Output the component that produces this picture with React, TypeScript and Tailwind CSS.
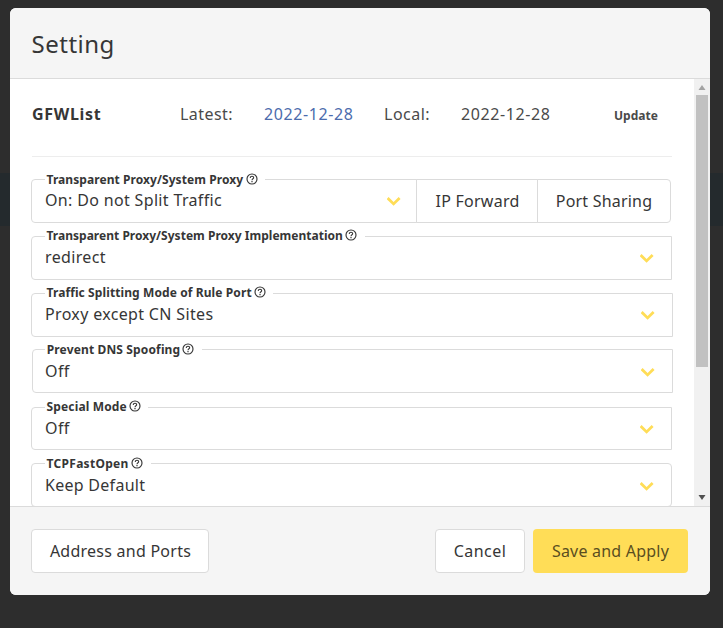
import type { ReactNode } from "react";

function Help() {
  return (
    <svg className="-mt-[2px] block h-[12px] w-[12px] shrink-0" viewBox="0 0 12 12" fill="none" stroke="#363636">
      <circle cx="6" cy="6" r="5" strokeWidth="1.15" />
      <path d="M4.3 4.9C4.3 3.8 5 3.2 6 3.2s1.7.6 1.7 1.5C7.7 5.7 6 5.9 6 7.2" strokeWidth="1.1" />
      <path d="M6 8v1.2" strokeWidth="1.2" />
    </svg>
  );
}

function Chevron() {
  return (
    <svg className="block h-[9px] w-[14px]" viewBox="0 0 14 9" fill="none" stroke="#ffdd57" strokeWidth="2.8" strokeLinejoin="miter">
      <path d="M.6 1.1 6.6 6.9 12.6 1.1" />
    </svg>
  );
}

type FieldProps = {
  label: string;
  labelClass: string;
  notchClass: string;
  value: string;
  valueClass: string;
  chevronClass: string;
  box: string;
};

function Field({ label, labelClass, notchClass, value, valueClass, chevronClass, box }: FieldProps) {
  return (
    <div className={`relative flex shrink-0 items-start justify-between border border-[#dbdbdb] bg-white ${box}`}>
      <div className={`absolute flex h-[14px] items-center bg-white ${notchClass}`}>
        <span className={`whitespace-nowrap text-[12px] font-bold leading-[14px] ${labelClass}`}>{label}</span>
        <Help />
      </div>
      <span className={`whitespace-nowrap text-[16px] leading-[24px] ${valueClass}`}>{value}</span>
      <div className={chevronClass}>
        <Chevron />
      </div>
    </div>
  );
}

function Button({ children, className }: { children: ReactNode; className: string }) {
  return (
    <button className={`flex h-[44px] items-center justify-center whitespace-nowrap border text-[16px] leading-[24px] ${className}`}>
      {children}
    </button>
  );
}

export default function App() {
  return (
    <div className="h-[628px] w-[723px] overflow-hidden bg-[linear-gradient(#2d2d2d_173px,#242a2d_173px,#242a2d_226px,#2d2d2d_226px)] pl-[10px] pt-[8px] font-['Noto_Sans',sans-serif] text-[#363636]">
      <div className="flex h-[587px] w-[700px] flex-col overflow-hidden rounded-[6px] bg-white">
        <header className="flex h-[71px] shrink-0 items-center border-b border-[#dbdbdb] bg-[#f5f5f5] pl-[21.5px] pt-[2px]">
          <h1 className="text-[24px] leading-[24px] tracking-[0.5px]">Setting</h1>
        </header>
        <main className="flex h-[427px] shrink-0 overflow-hidden">
          <div className="flex w-[684px] flex-col overflow-hidden pl-[21px]">
            <div className="ml-px flex h-[78px] w-[640px] shrink-0 items-start border-b border-[#ededed] pt-[23px] text-[16px] leading-[24px] text-[#4a4a4a]">
              <strong className="w-[148px] font-bold tracking-[0.7px] text-[#363636]">GFWList</strong>
              <span className="w-[84px] tracking-[0.45px]">Latest:</span>
              <span className="w-[120px] tracking-[0.6px] text-[#4c6cad]">2022-12-28</span>
              <span className="w-[77px] tracking-[0.5px]">Local:</span>
              <span className="w-[153px] tracking-[0.6px]">2022-12-28</span>
              <strong className="pt-[2px] text-[12px] font-bold">Update</strong>
            </div>
            <div className="mt-[22px] flex shrink-0">
              <Field
                label="Transparent Proxy/System Proxy"
                labelClass="mr-[2.5px] tracking-[0.07px]"
                notchClass="left-[13px] top-[-7px] w-[220px] pl-[1.5px]"
                value="On: Do not Split Traffic"
                valueClass="pt-[8px] tracking-[0.34px]"
                chevronClass="pt-[17px]"
                box="h-[44px] w-[386px] rounded-l-[4px] pl-[13px] pr-[15px]"
              />
              <Button className="-ml-px w-[122px] border-[#dbdbdb] bg-white pl-px tracking-[0.25px]">IP Forward</Button>
              <Button className="-ml-px w-[134px] rounded-r-[4px] border-[#dbdbdb] bg-white tracking-[0.2px]">Port Sharing</Button>
            </div>
            <Field
              label="Transparent Proxy/System Proxy Implementation"
              labelClass="mr-[2px] tracking-[0.02px]"
              notchClass="left-[13px] top-[-8px] w-[320px] pl-[1.5px]"
              value="redirect"
              valueClass="pt-[8px] tracking-[0.35px]"
              chevronClass="pt-[17px]"
              box="mt-[13px] h-[44px] w-[641px] rounded-l-[4px] pl-[13px] pr-[17px]"
            />
            <Field
              label="Traffic Splitting Mode of Rule Port"
              labelClass="mr-[2px] tracking-[0.1px]"
              notchClass="left-[13px] top-[-8px] w-[228px] pl-[1.5px]"
              value="Proxy except CN Sites"
              valueClass="pt-[8px] tracking-[0.34px]"
              chevronClass="pt-[17px]"
              box="mt-[13px] h-[44px] w-[642px] rounded-l-[4px] pl-[13px] pr-[17px]"
            />
            <Field
              label="Prevent DNS Spoofing"
              labelClass="mr-[2px] tracking-[0.14px]"
              notchClass="left-[12px] top-[-7px] w-[157px] pl-[1.75px]"
              value="Off"
              valueClass="pt-[9px] tracking-[0.4px]"
              chevronClass="pt-[18px]"
              box="ml-px mt-[12px] h-[44px] w-[641px] rounded-l-[4px] pl-[12px] pr-[17px]"
            />
            <Field
              label="Special Mode"
              labelClass="mr-[2px] tracking-[0.15px]"
              notchClass="left-[13px] top-[-8px] w-[103px] pl-[1.5px]"
              value="Off"
              valueClass="pt-[8px] tracking-[0.4px]"
              chevronClass="pt-[17px]"
              box="mt-[14px] h-[43px] w-[641px] rounded-l-[4px] pl-[13px] pr-[17px]"
            />
            <Field
              label="TCPFastOpen"
              labelClass="mr-[2.5px] tracking-[0.3px]"
              notchClass="left-[13px] top-[-7px] w-[106px] pl-[1.5px]"
              value="Keep Default"
              valueClass="pt-[9px] tracking-[0.28px]"
              chevronClass="pt-[18px]"
              box="mt-[13px] h-[44px] w-[641px] rounded-[4px] pl-[13px] pr-[17px]"
            />
          </div>
          <div className="flex w-[16px] flex-col items-center bg-[#f1f1f1]">
            <svg className="block h-[16px] w-[16px] shrink-0" viewBox="0 0 16 16"><path d="M4.5 11 8 6l3.5 5z" fill="#a3a3a3" /></svg>
            <div className="h-[272px] w-[12px] shrink-0 bg-[#c1c1c1]" />
            <svg className="mt-auto block h-[16px] w-[16px] shrink-0" viewBox="0 0 16 16"><path d="M4.5 5 8 10l3.5-5z" fill="#505050" /></svg>
          </div>
        </main>
        <footer className="flex h-[89px] shrink-0 items-center border-t border-[#dbdbdb] bg-[#f5f5f5] pl-[21px] pr-[22px]">
          <Button className="mr-auto w-[178px] rounded-[4px] border-[#dbdbdb] bg-white pl-px tracking-[0.25px]">Address and Ports</Button>
          <Button className="w-[90px] rounded-[4px] border-[#dbdbdb] bg-white tracking-[0.45px]">Cancel</Button>
          <Button className="ml-[8px] w-[155px] rounded-[4px] border-transparent bg-[#ffdd57] text-[#5a4e1f] tracking-[0.22px]">Save and Apply</Button>
        </footer>
      </div>
    </div>
  );
}
